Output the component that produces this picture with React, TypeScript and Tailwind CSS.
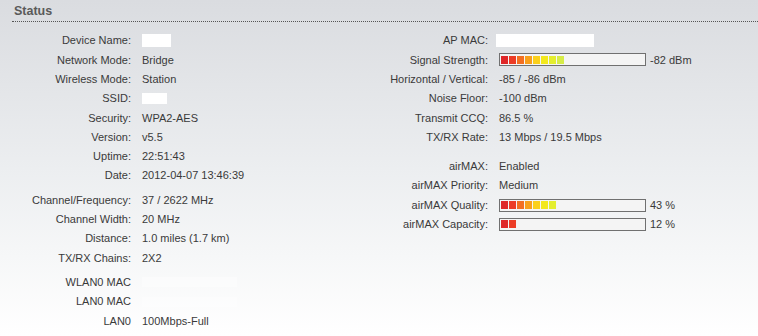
import React from "react";

const COLORS = ["#df2627", "#ec3c26", "#f36f22", "#f8a01c", "#fbd01b", "#f3e81c", "#e4ee2f", "#d6ec48"];

function Bar({ n, text }: { n: number; text: string }) {
  return (
    <div className="flex items-center">
      <div className="w-[147px] h-[13px] border border-[#707070] bg-[#f4f4f4] flex items-center pl-[1px]">
        {COLORS.slice(0, n).map((c, i) => (
          <div key={i} className="w-[7px] h-[8px] mr-[1px]" style={{ background: c }} />
        ))}
      </div>
      <span className="ml-[4px]">{text}</span>
    </div>
  );
}

type Row = [string, React.ReactNode];

function Rows({ rows, labelW, gapCls }: { rows: Row[]; labelW: string; gapCls?: string }) {
  return (
    <div className={gapCls}>
      {rows.map(([l, v], i) => (
        <div key={i} className="flex items-center h-[19.3px]">
          <div className={`${labelW} text-right shrink-0`}>{l}</div>
          <div className="pl-[11px] flex items-center">{v}</div>
        </div>
      ))}
    </div>
  );
}

const Blank = ({ w, h = "h-[13px]" }: { w: string; h?: string }) => <div className={`${w} ${h} bg-white`} />;

export default function App() {
  return (
    <div
      className="w-[758px] h-[336px] overflow-hidden bg-gradient-to-b from-[#dadce0] via-[#eceef0] to-[#ffffff] text-[11px] text-[#3a3a3a]"
      style={{ fontFamily: '"Liberation Sans", Arial, sans-serif' }}
    >
      <div className="ml-[12px] pl-[2px] pt-[3px] h-[22px] border-b border-dotted border-[#555]">
        <span className="text-[12.5px] font-bold text-[#5a5a5a] leading-[16px]">Status</span>
      </div>
      <div className="flex pt-[9px]">
        <div className="w-[380px]">
          <Rows
            labelW="w-[131px]"
            rows={[
              ["Device Name:", <Blank w="w-[29px]" />],
              ["Network Mode:", "Bridge"],
              ["Wireless Mode:", "Station"],
              ["SSID:", <Blank w="w-[25px]" h="h-[11px]" />],
              ["Security:", "WPA2-AES"],
              ["Version:", "v5.5"],
              ["Uptime:", "22:51:43"],
              ["Date:", "2012-04-07 13:46:39"],
            ]}
          />
          <Rows
            gapCls="mt-[5px]"
            labelW="w-[131px]"
            rows={[
              ["Channel/Frequency:", "37 / 2622 MHz"],
              ["Channel Width:", "20 MHz"],
              ["Distance:", "1.0 miles (1.7 km)"],
              ["TX/RX Chains:", "2X2"],
            ]}
          />
          <Rows
            gapCls="mt-[5px]"
            labelW="w-[131px]"
            rows={[
              ["WLAN0 MAC", <div className="w-[95px] h-[10px] bg-white/40" />],
              ["LAN0 MAC", <div className="w-[95px] h-[10px] bg-white/40" />],
              ["LAN0", "100Mbps-Full"],
            ]}
          />
        </div>
        <div className="flex-1">
          <Rows
            labelW="w-[108px]"
            rows={[
              ["AP MAC:", <div className="-ml-[3px]"><Blank w="w-[98px]" /></div>],
              ["Signal Strength:", <Bar n={8} text="-82 dBm" />],
              ["Horizontal / Vertical:", "-85 / -86 dBm"],
              ["Noise Floor:", "-100 dBm"],
              ["Transmit CCQ:", "86.5 %"],
              ["TX/RX Rate:", "13 Mbps / 19.5 Mbps"],
            ]}
          />
          <Rows
            gapCls="mt-[10px]"
            labelW="w-[108px]"
            rows={[
              ["airMAX:", "Enabled"],
              ["airMAX Priority:", "Medium"],
              ["airMAX Quality:", <Bar n={7} text="43 %" />],
              ["airMAX Capacity:", <Bar n={2} text="12 %" />],
            ]}
          />
        </div>
      </div>
    </div>
  );
}
